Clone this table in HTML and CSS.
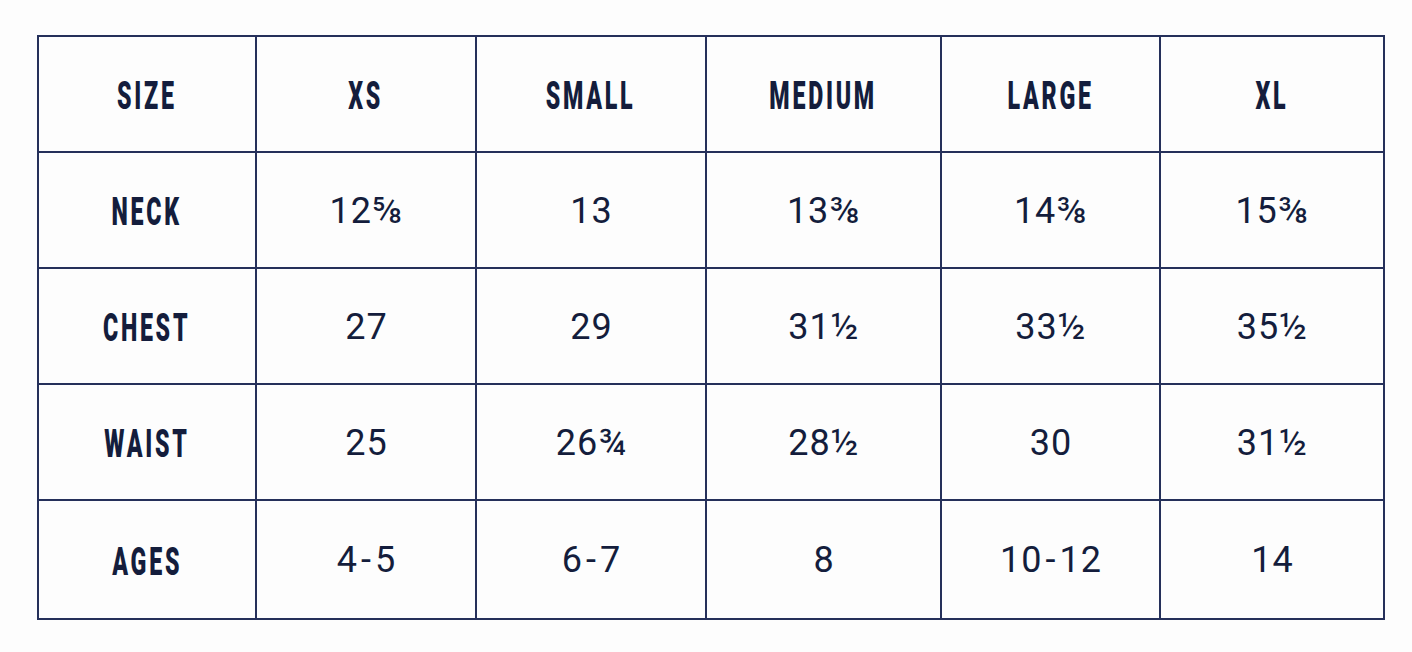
FILE: index.html
```html
<!DOCTYPE html>
<html lang="en">
<head>
<meta charset="utf-8">
<title>Size Chart</title>
<link rel="stylesheet" href="styles.css">
</head>
<body>
<div class="chart">
  <div class="cell"><span class="label">SIZE</span></div>
  <div class="cell"><span class="label">XS</span></div>
  <div class="cell"><span class="label">SMALL</span></div>
  <div class="cell"><span class="label">MEDIUM</span></div>
  <div class="cell"><span class="label">LARGE</span></div>
  <div class="cell"><span class="label">XL</span></div>

  <div class="cell"><span class="label">NECK</span></div>
  <div class="cell"><span class="num">12⅝</span></div>
  <div class="cell"><span class="num">13</span></div>
  <div class="cell"><span class="num">13⅜</span></div>
  <div class="cell"><span class="num">14⅜</span></div>
  <div class="cell"><span class="num">15⅜</span></div>

  <div class="cell"><span class="label">CHEST</span></div>
  <div class="cell"><span class="num">27</span></div>
  <div class="cell"><span class="num">29</span></div>
  <div class="cell"><span class="num">31½</span></div>
  <div class="cell"><span class="num">33½</span></div>
  <div class="cell"><span class="num">35½</span></div>

  <div class="cell"><span class="label">WAIST</span></div>
  <div class="cell"><span class="num">25</span></div>
  <div class="cell"><span class="num">26¾</span></div>
  <div class="cell"><span class="num">28½</span></div>
  <div class="cell"><span class="num">30</span></div>
  <div class="cell"><span class="num">31½</span></div>

  <div class="cell"><span class="label">AGES</span></div>
  <div class="cell"><span class="num">4<span class="dash">-</span>5</span></div>
  <div class="cell"><span class="num">6<span class="dash">-</span>7</span></div>
  <div class="cell"><span class="num">8</span></div>
  <div class="cell"><span class="num">10<span class="dash">-</span>12</span></div>
  <div class="cell"><span class="num">14</span></div>
</div>
</body>
</html>
```

FILE: styles.css
```css
html, body {
  margin: 0;
  padding: 0;
  background: #fdfdfd;
}

body {
  padding: 35px 0 0 37px;
  font-family: Roboto, "Liberation Sans", sans-serif;
  color: #141d3c;
}

.chart {
  display: inline-grid;
  grid-template-columns: 216px 218px 228px 233px 217px 222px;
  grid-template-rows: 114px 114px 114px 114px 117px;
  gap: 2px;
  padding: 2px;
  background: #25305a;
}

.cell {
  background: #fdfdfd;
  display: flex;
  align-items: center;
  justify-content: center;
  overflow: hidden;
}

.label {
  display: inline-block;
  font-weight: 900;
  font-size: 38px;
  line-height: 1;
  letter-spacing: 4.5px;
  padding-top: 4px;
  transform: scaleX(0.61);
  white-space: nowrap;
}

.num {
  display: inline-block;
  font-weight: 400;
  font-size: 36px;
  line-height: 1;
  letter-spacing: 1px;
  padding-left: 1px;
  padding-top: 1px;
  white-space: nowrap;
}

.dash {
  margin: 0 3px;
}
```
